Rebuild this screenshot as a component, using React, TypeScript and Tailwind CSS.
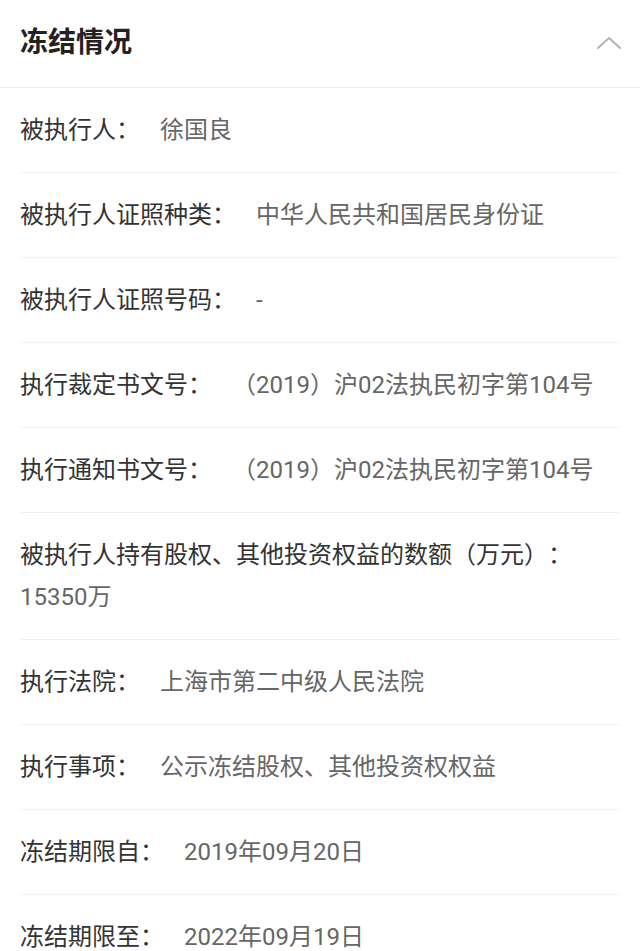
import React from 'react';

type Row = { label: string; value: string; wrap?: boolean };

const rows: Row[] = [
  { label: '被执行人：', value: '徐国良' },
  { label: '被执行人证照种类：', value: '中华人民共和国居民身份证' },
  { label: '被执行人证照号码：', value: '-' },
  { label: '执行裁定书文号：', value: '（2019）沪02法执民初字第104号' },
  { label: '执行通知书文号：', value: '（2019）沪02法执民初字第104号' },
  { label: '被执行人持有股权、其他投资权益的数额（万元）：', value: '15350万', wrap: true },
  { label: '执行法院：', value: '上海市第二中级人民法院' },
  { label: '执行事项：', value: '公示冻结股权、其他投资权权益' },
  { label: '冻结期限自：', value: '2019年09月20日' },
  { label: '冻结期限至：', value: '2022年09月19日' },
];

const font = { fontFamily: 'Roboto, "Noto Sans CJK SC", sans-serif' };

const App: React.FC = () => {
  return (
    <div className="min-h-screen bg-white overflow-hidden [text-spacing-trim:space-all]" style={font}>
      <div className="flex h-[88px] items-center justify-between border-b border-[#ececec] px-5 pb-[2px]">
        <h2 className="text-[28px] font-bold text-[#222]">冻结情况</h2>
        <svg width="26" height="14" viewBox="0 0 26 14" fill="none" className="mr-[-2px]">
          <path d="M2 12 L13 2 L24 12" stroke="#b3b3b3" strokeWidth="2" strokeLinecap="round" strokeLinejoin="round" />
        </svg>
      </div>
      <div className="px-5">
        {rows.map((r, i) => (
          <div
            key={i}
            className={`py-[21px] text-[24px] leading-[42px] ${i < rows.length - 1 ? 'border-b border-[#f1f1f1]' : ''}`}
          >
            {r.wrap ? (
              <>
                <div className="text-[#333]">{r.label}</div>
                <div className="text-[#666]">{r.value}</div>
              </>
            ) : (
              <div className="flex gap-5">
                <span className="text-[#333]">{r.label}</span>
                <span className="text-[#666]">{r.value}</span>
              </div>
            )}
          </div>
        ))}
      </div>
    </div>
  );
};

export default App;
